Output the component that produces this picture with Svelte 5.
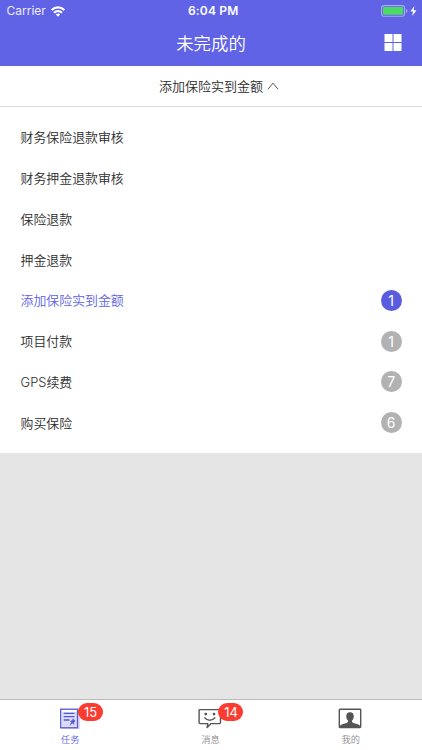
<script>
  const rows = [
    { label: '财务保险退款审核' },
    { label: '财务押金退款审核' },
    { label: '保险退款' },
    { label: '押金退款' },
    { label: '添加保险实到金额', count: 1, active: true },
    { label: '项目付款', count: 1 },
    { label: 'GPS续费', count: 7 },
    { label: '购买保险', count: 6 }
  ];
  const tabs = [
    { id: 'task', label: '任务', badge: 15, active: true },
    { id: 'message', label: '消息', badge: 14 },
    { id: 'me', label: '我的' }
  ];
</script>

<div class="screen">
  <header>
    <div class="status">
      <div class="carrier">
        <span>Carrier</span>
        <svg width="14" height="11" viewBox="0 0 14 11" fill="none" stroke="#fff" stroke-width="2.1">
          <path d="M0.7 4.1C4.3 0.4 9.7 0.4 13.3 4.1" />
          <path d="M3 6.8C5.3 4.5 8.7 4.5 11 6.8" />
          <path d="M7 10.8L4.8 8.5C6.1 7.3 7.9 7.3 9.2 8.5Z" fill="#fff" stroke="none" />
        </svg>
      </div>
      <time>6:04 PM</time>
      <div class="power">
        <svg width="36" height="12" viewBox="0 0 36 12">
          <rect x="0.6" y="0.6" width="23" height="10.6" rx="2.4" fill="none" stroke="#a9abf1" stroke-width="1.1" />
          <rect x="2" y="2" width="20.2" height="7.8" rx="1.2" fill="#4cd964" />
          <path d="M25 4q1.5 .4 1.5 2t-1.5 2z" fill="#a9abf1" />
          <path d="M33.5 1L29.3 6.5h2.8L31.2 11l4.3-5.7h-3z" fill="#fff" />
        </svg>
      </div>
    </div>
    <div class="nav">
      <h1>未完成的</h1>
      <svg class="grid" width="18" height="18" viewBox="0 0 18 18" fill="#fff">
        <rect x="0.5" y="0" width="8" height="8" /><rect x="9.5" y="0" width="8" height="8" />
        <rect x="0.5" y="9" width="8" height="8" /><rect x="9.5" y="9" width="8" height="8" />
      </svg>
    </div>
  </header>

  <div class="filter">
    <span>添加保险实到金额</span>
    <svg width="12" height="8" viewBox="0 0 12 8" fill="none" stroke="#555" stroke-width="1"><path d="M1 7.2L6 1.2L11 7.2" /></svg>
  </div>

  <ul>
    {#each rows as row}
      <li class:active={row.active}>
        <span>{row.label}</span>
        {#if row.count}<b>{row.count}</b>{/if}
      </li>
    {/each}
  </ul>

  <div class="shade"></div>

  <footer>
    {#each tabs as tab}
      <div class="tab" class:active={tab.active}>
        <div class="icon">
          {#if tab.id === 'task'}
            <svg width="24" height="22" viewBox="0 0 24 22" fill="none" stroke="#5658cf">
              <path d="M4 4h18v17H4z" fill="#dcdcfa" stroke="none" />
              <rect x="2.7" y="1.2" width="16.8" height="18.6" stroke-width="1.3" />
              <path d="M5.7 5.4h10.8M5.7 8.7h10.8M5.7 12h5.8" stroke-width="1.3" />
              <path d="M15 10.8l2.2 2.1-1.3 1.2.1 2.2-1.7-1.3-2.3 2.3 1.4-3.1-1.1-1.2 1.9-.3z" fill="#5658cf" stroke-width=".5" />
            </svg>
          {:else if tab.id === 'message'}
            <svg width="24" height="22" viewBox="0 0 24 22" fill="none" stroke="#555" stroke-width="1.4">
              <path d="M9.8 15.6H2.2q-1.1 0-1.1-1V2.6q0-1 1.1-1h19.2q1.1 0 1.1 1v12q0 1-1.1 1h-8.3l-4 4z" stroke-linejoin="round" />
              <path d="M6.3 9.5q5.5 5.5 11 0" />
              <circle cx="7.8" cy="6.1" r="1.4" fill="#555" stroke="none" />
              <circle cx="16" cy="6.1" r="1.4" fill="#555" stroke="none" />
            </svg>
          {:else}
            <svg width="24" height="22" viewBox="0 0 24 22">
              <rect x="1.3" y="1.2" width="21.4" height="18.3" rx=".7" fill="#fff" stroke="#555" stroke-width="1.4" />
              <path d="M2 19v-1.2q.7-1.1 3-1.7l3.7-1.2q1.7-.8 1.4-2.2Q8.2 11.2 8.2 8.6 8.2 4.2 12 4.2t3.8 4.4q0 2.6-1.9 4.1-.3 1.4 1.4 2.2l3.7 1.2q2.3.6 3 1.7V19z" fill="#555" />
            </svg>
          {/if}
          {#if tab.badge}<em>{tab.badge}</em>{/if}
        </div>
        <span>{tab.label}</span>
      </div>
    {/each}
  </footer>
</div>

<style>
  .screen {
    width: 422px;
    height: 750px;
    display: flex;
    flex-direction: column;
    overflow: hidden;
    background: #fff;
    color: #2c2c2c;
    font-family: Inter, 'Noto Sans CJK SC', sans-serif;
    font-weight: 350;
  }
  header {
    height: 65.5px;
    flex: none;
    background: #6063e5;
    color: #fff;
  }
  .status {
    height: 22px;
    display: grid;
    grid-template-columns: 1fr auto 1fr;
    align-items: center;
    padding: 0 5px 0 6.5px;
    font-size: 12px;
  }
  .carrier { display: flex; align-items: center; gap: 5px; color: #ececff; font-weight: 400; }
  .carrier span, time { padding-bottom: 1px; }
  time { font-weight: 600; letter-spacing: 0.2px; padding-left: 3px; }
  .power { display: flex; justify-content: flex-end; }
  .nav {
    height: 43px;
    display: grid;
    grid-template-columns: 1fr auto 1fr;
    align-items: center;
    padding: 0 20px;
  }
  h1 {
    grid-column: 2;
    margin: 0;
    font-size: 17.4px;
    line-height: 24px;
    font-weight: 350;
  }
  .grid { justify-self: end; margin-bottom: 1px; }
  .filter {
    height: 41px;
    flex: none;
    box-sizing: border-box;
    border-bottom: 1px solid #ddd;
    display: flex;
    align-items: center;
    justify-content: center;
    gap: 4px;
    padding-left: 16px;
    font-size: 13px;
  }
  ul {
    list-style: none;
    margin: 0;
    padding: 10.5px 20.4px 10px 20.6px;
    flex: none;
    font-size: 12.9px;
  }
  li {
    height: 40.75px;
    display: flex;
    align-items: center;
    justify-content: space-between;
  }
  li span { padding-bottom: 1px; }
  li.active { color: #6063e5; }
  b {
    width: 21px;
    height: 21px;
    border-radius: 50%;
    background: #b2b2b2;
    color: #fff;
    font-weight: 400;
    font-size: 14px;
    line-height: 21px;
    text-align: center;
  }
  li.active b { background: #5a5ce0; }
  .shade { flex: 1; background: #e5e5e5; }
  footer {
    height: 51px;
    flex: none;
    box-sizing: border-box;
    border-top: 1px solid #bbb;
    display: flex;
    background: #fff;
  }
  .tab {
    flex: 1;
    display: flex;
    flex-direction: column;
    align-items: center;
    padding-top: 8px;
    font-size: 9.3px;
    line-height: 14px;
    color: #8c8c8c;
  }
  .tab.active { color: #6063e5; }
  .icon { position: relative; height: 25px; margin-right: 1.2px; }
  .icon svg { display: block; }
  .tab:last-child { padding-right: 1px; }
  em {
    position: absolute;
    left: 20.6px;
    top: -5px;
    width: 25px;
    height: 18px;
    border-radius: 9px;
    background: #fb3c31;
    color: #fff;
    font-style: normal;
    font-weight: 400;
    font-size: 13px;
    line-height: 18px;
    text-align: center;
  }
</style>
